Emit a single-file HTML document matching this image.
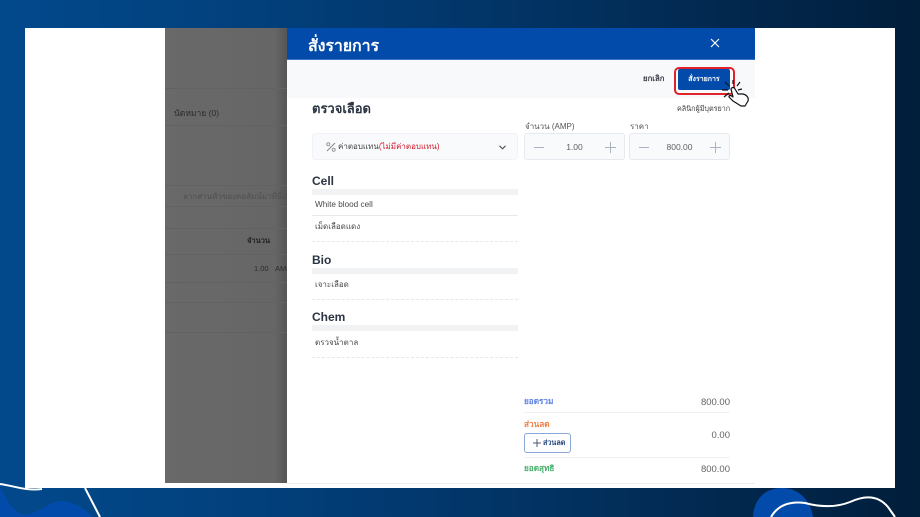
<!DOCTYPE html>
<html lang="th">
<head>
<meta charset="utf-8">
<title>สั่งรายการ</title>
<style>
*{box-sizing:border-box;margin:0;padding:0}
html,body{width:920px;height:517px;overflow:hidden}
body{position:relative;font-family:"Liberation Sans","Noto Sans CJK SC",sans-serif;background:#022a52;color:#2b3442}
#w{position:absolute;left:0;top:0;width:920px;height:517px;filter:blur(.35px);background:linear-gradient(90deg,#02498c 0%,#023f7a 30%,#023466 55%,#022a52 75%,#011e3b 100%)}
.a{position:absolute;white-space:nowrap}
.slide{position:absolute;left:25px;top:28px;width:870px;height:460px;background:#fff}
.gray{position:absolute;left:165px;top:28px;width:122px;height:455px;background:linear-gradient(90deg,#696969 0,#666 90%,#555 100%)}
.ln{position:absolute;left:165px;width:122px;height:1px;background:#626262}
.modal{position:absolute;left:287px;top:28px;width:468px;height:455px;background:#fff}
.head{position:absolute;left:287px;top:28px;width:468px;height:32px;background:#034bab;border-bottom:1px solid #3c74c2}
.bar{position:absolute;left:287px;top:60px;width:468px;height:38px;background:#f7f9fb}
.box{position:absolute;background:#f9fafc;border:1px solid #e6eaf0;border-radius:3px}
.sec{position:absolute;left:312px;width:206px;height:6px;background:#f1f2f4}
.dot{position:absolute;left:312px;width:206px;border-top:1px dashed #e4e8ef}
.h{font-size:12px;font-weight:bold;color:#2b3442}
.t{font-size:8px;color:#4a4a4a}
.v{font-size:9.5px;color:#626262}
svg{position:absolute;overflow:visible}
</style>
</head>
<body>
<div id="w">
<svg style="left:0;top:0" width="920" height="517" viewBox="0 0 920 517">
<path d="M0 486 C8 505 18 517 30 514 C44 510 50 501 62 501 C76 502 86 510 92 517 L0 517Z" fill="#034bab"/>
<path d="M0 484 C15 486 25 491 42 489" fill="none" stroke="#fff" stroke-width="2"/>
<path d="M85 488 L100 517" fill="none" stroke="#fff" stroke-width="2"/>
<path d="M753 517 C754 497 767 488 782 488 C800 488 811 502 813 517Z" fill="#034bab"/>
<path d="M771 517 C778 505 790 501 805 503 C820 507 835 508 850 502 C865 495 878 495 888 507 L895 517" fill="none" stroke="#fff" stroke-width="2"/>
</svg>
<div class="slide"></div>
<div class="gray"></div>
<div class="ln" style="top:88px"></div>
<div class="ln" style="top:125px"></div>
<div class="ln" style="top:185px"></div>
<div class="ln" style="top:206px"></div>
<div class="ln" style="top:228px"></div>
<div class="ln" style="top:254px"></div>
<div class="ln" style="top:282px"></div>
<div class="ln" style="top:302px"></div>
<div class="ln" style="top:332px"></div>
<div class="a" style="left:174px;top:106px;font-size:8.5px;color:#2c2c2c">นัดหมาย (0)</div>
<div class="a" style="left:183px;top:190px;font-size:8px;color:#505050;width:104px;overflow:hidden">ลากส่วนหัวของคอลัมน์มาที่นี่เพื่อจัด</div>
<div class="a" style="left:247px;top:235px;font-size:7.5px;font-weight:bold;color:#222">จำนวน</div>
<div class="a" style="left:254px;top:264px;font-size:7.5px;color:#2c2c2c">1.00</div>
<div class="a" style="left:275px;top:264px;font-size:7.5px;color:#2c2c2c;width:12px;overflow:hidden">AMP</div>

<div class="modal"></div>
<div class="head"></div>
<div class="a" style="left:308px;top:34px;font-size:16px;font-weight:bold;color:#fff;letter-spacing:-.1px">สั่งรายการ</div>
<svg style="left:711px;top:39px" width="8" height="8" viewBox="0 0 8 8"><path d="M0 0L8 8M8 0L0 8" stroke="#fff" stroke-width="1.2" fill="none"/></svg>
<div class="bar"></div>
<div class="a" style="left:643px;top:73px;font-size:7.8px;font-weight:bold;color:#3a3f48">ยกเลิก</div>
<div class="a" style="left:674px;top:67px;width:61px;height:28px;border:2px solid #e0222c;border-radius:5px"></div>
<div class="a" style="left:678px;top:69px;width:52px;height:21px;background:#034bab;border-radius:2px;color:#fff;font-size:7px;font-weight:bold;text-align:center;line-height:21px">สั่งรายการ</div>
<svg style="left:720px;top:78px" width="32" height="30" viewBox="0 0 32 30">
<path d="M13 2L13 6M5 4L9 8M20 4L17 8M2 12L8 12M22 11L18 12M4 19L9 15" stroke="#111" stroke-width="1.2" fill="none"/>
<path d="M11 11 C12 9 14 9 15 11 L18 16 L23 16 C27 17 29 20 28 23 L25 28 L21 28 L13 23 L9 19 C9 17 11 17 13 19Z" fill="#fff" stroke="#111" stroke-width="1.2" stroke-linejoin="round"/>
</svg>

<div class="a" style="left:312px;top:98px;font-size:13px;font-weight:bold;color:#2b3442">ตรวจเลือด</div>
<div class="a" style="left:677px;top:104px;font-size:7.2px;color:#444">คลินิกผู้มีบุตรยาก</div>
<div class="box" style="left:312px;top:133px;width:206px;height:27px;border-color:#f1f3f6"></div>
<svg style="left:326px;top:142px" width="10" height="10" viewBox="0 0 10 10"><path d="M1 9L9 1" stroke="#888" fill="none"/><circle cx="2.3" cy="2.3" r="1.5" fill="none" stroke="#999"/><circle cx="7.7" cy="7.7" r="1.5" fill="none" stroke="#999"/></svg>
<div class="a" style="left:338px;top:140px;font-size:8px;color:#444">ค่าตอบแทน<span style="color:#d02030">(ไม่มีค่าตอบแทน)</span></div>
<svg style="left:499px;top:145px" width="7" height="5" viewBox="0 0 7 5"><path d="M.5 .8L3.5 3.8L6.5 .8" stroke="#555" stroke-width="1.1" fill="none"/></svg>

<div class="a" style="left:525px;top:120px;font-size:8px;color:#555">จำนวน (AMP)</div>
<div class="a" style="left:630px;top:120px;font-size:8px;color:#555">ราคา</div>
<div class="box" style="left:524px;top:133px;width:101px;height:27px"></div>
<div class="box" style="left:629px;top:133px;width:101px;height:27px"></div>
<svg style="left:534px;top:142px" width="196" height="11" viewBox="0 0 196 11" fill="none" stroke="#aab3bf" stroke-width="1">
<path d="M0 5.5H10M71 5.5H82M76.5 0V11M105 5.5H115M176 5.5H187M181.5 0V11"/>
</svg>
<div class="a v" style="left:524px;top:142px;width:101px;text-align:center;font-size:8.5px">1.00</div>
<div class="a v" style="left:629px;top:142px;width:101px;text-align:center;font-size:8.5px">800.00</div>

<div class="a h" style="left:312px;top:174px">Cell</div>
<div class="sec" style="top:189px"></div>
<div class="a t" style="left:315px;top:200px;font-size:8.2px">White blood cell</div>
<div style="position:absolute;left:312px;top:215px;width:206px;height:1px;background:#e8e9eb"></div>
<div class="a t" style="left:315px;top:220px">เม็ดเลือดแดง</div>
<div class="dot" style="top:241px"></div>
<div class="a h" style="left:312px;top:253px">Bio</div>
<div class="sec" style="top:268px"></div>
<div class="a t" style="left:315px;top:278px">เจาะเลือด</div>
<div class="dot" style="top:299px"></div>
<div class="a h" style="left:312px;top:310px">Chem</div>
<div class="sec" style="top:325px"></div>
<div class="a t" style="left:315px;top:336px">ตรวจน้ำตาล</div>
<div class="dot" style="top:357px"></div>

<div class="a" style="left:524px;top:395px;font-size:8.2px;font-weight:bold;color:#5a7fe0">ยอดรวม</div>
<div class="a v" style="left:690px;top:397px;width:40px;text-align:right">800.00</div>
<div style="position:absolute;left:524px;top:412px;width:206px;height:1px;background:#f0f1f3"></div>
<div class="a" style="left:524px;top:418px;font-size:8.2px;font-weight:bold;color:#ef7f45">ส่วนลด</div>
<div class="a" style="left:524px;top:433px;width:47px;height:20px;border:1px solid #8aa8d8;border-radius:3px;background:#fff"></div>
<svg style="left:533px;top:439px" width="8" height="8" viewBox="0 0 8 8"><path d="M0 4H8M4 0V8" stroke="#4a5a78" fill="none"/></svg>
<div class="a" style="left:543px;top:438px;font-size:7.2px;font-weight:bold;color:#24497f">ส่วนลด</div>
<div class="a v" style="left:690px;top:430px;width:40px;text-align:right">0.00</div>
<div style="position:absolute;left:524px;top:457px;width:206px;height:1px;background:#f0f1f3"></div>
<div class="a" style="left:524px;top:462px;font-size:8.2px;font-weight:bold;color:#45ae6b">ยอดสุทธิ</div>
<div class="a v" style="left:690px;top:464px;width:40px;text-align:right">800.00</div>
<div style="position:absolute;left:287px;top:483px;width:468px;height:1px;background:#eceef1"></div>
</div>
</body>
</html>
